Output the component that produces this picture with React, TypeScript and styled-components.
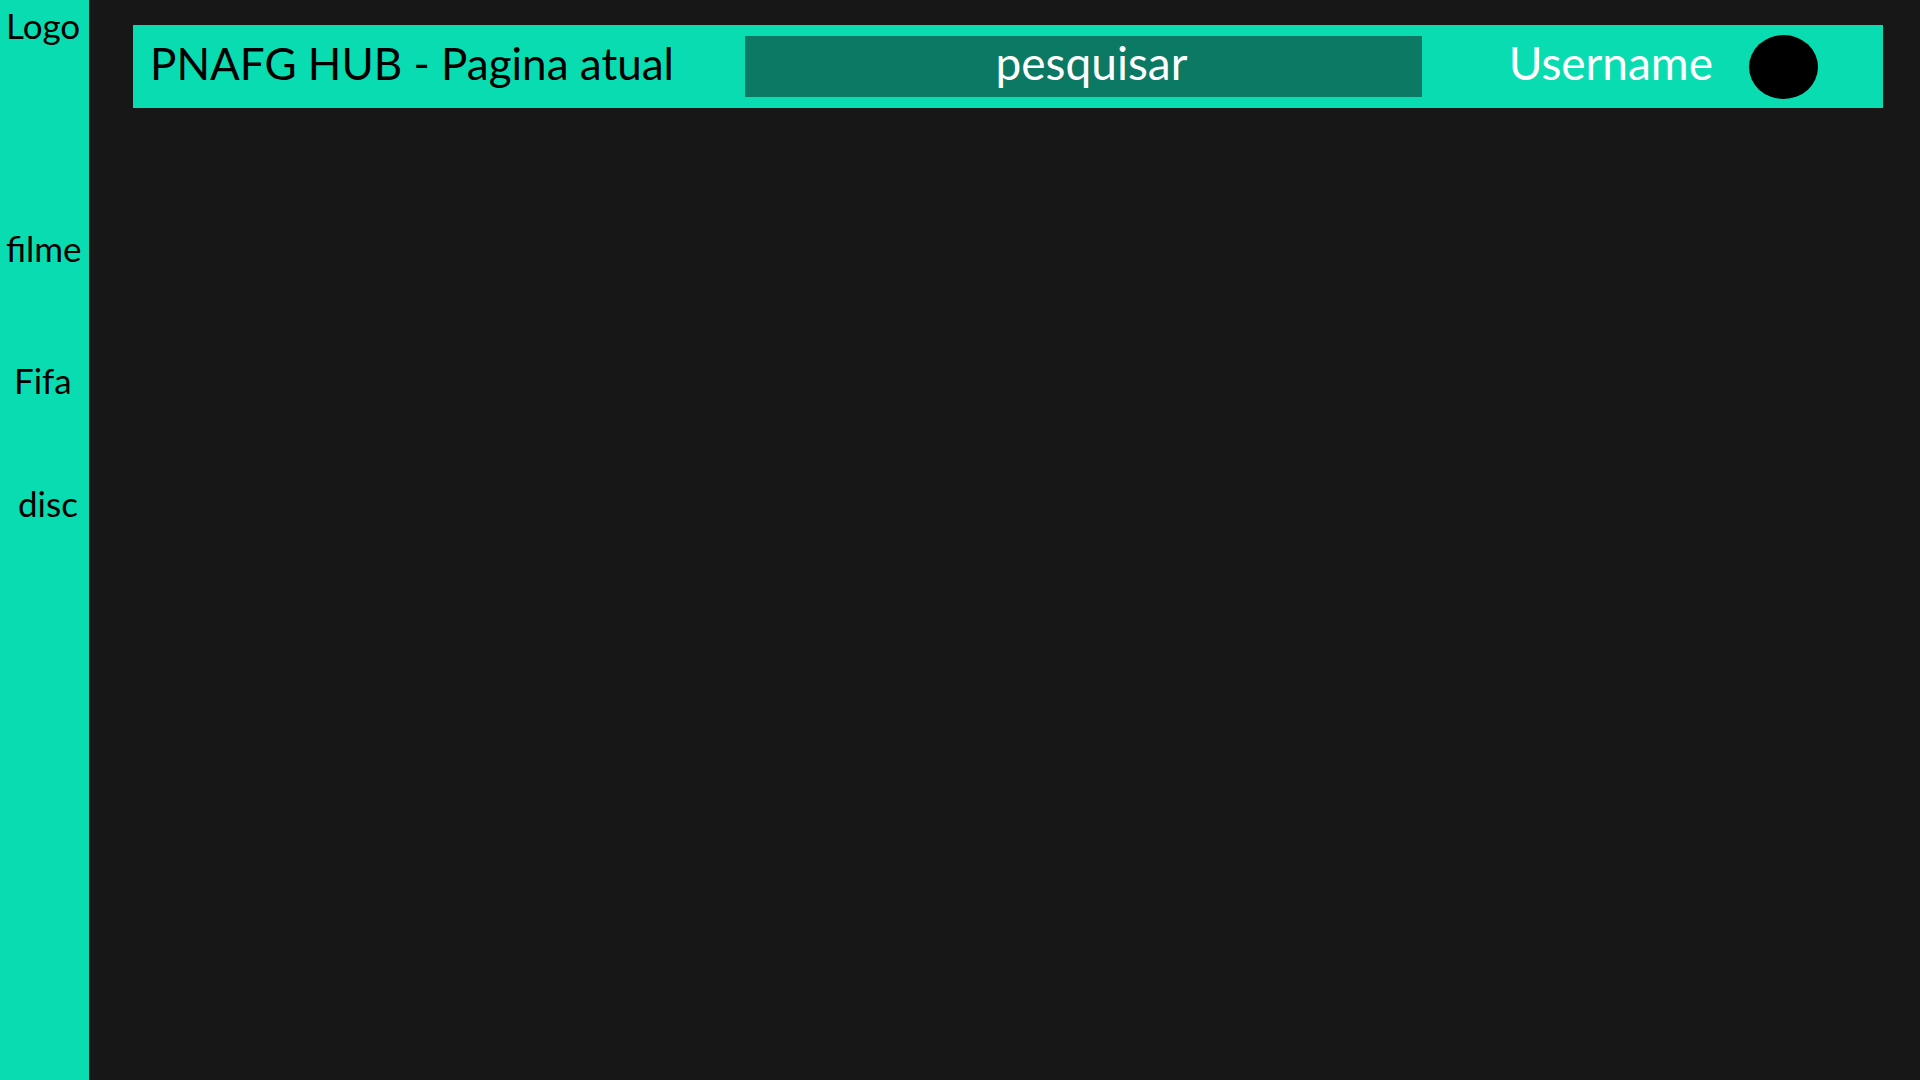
import React from "react";
import styled, { createGlobalStyle } from "styled-components";

const GlobalStyle = createGlobalStyle`
  * { box-sizing: border-box; }
  body { margin: 0; background: #171717; font-family: Lato, "Noto Sans", sans-serif; }
`;

const Page = styled.div`
  display: flex;
  min-height: 100vh;
`;

const Sidebar = styled.nav`
  display: flex;
  flex-direction: column;
  flex: 0 0 89px;
  background: #0adcb2;
  color: #000;
`;

const SideLink = styled.a<{ $gap: number; $indent: number }>`
  margin-top: ${(p) => p.$gap}px;
  padding-left: ${(p) => p.$indent}px;
  color: inherit;
  font-size: 35px;
  line-height: 48px;
  text-decoration: none;
  white-space: nowrap;
`;

const Main = styled.main`
  flex: 1;
  min-width: 0;
  padding: 25px 37px 25px 44px;
`;

const TopBar = styled.header`
  display: flex;
  align-items: center;
  height: 83px;
  padding: 0 65px 0 17px;
  background: #0adcb2;
`;

const Title = styled.h1`
  flex: 0 0 595px;
  margin: 0;
  padding-bottom: 8px;
  font-size: 44px;
  font-weight: 400;
  line-height: 60px;
  white-space: nowrap;
`;

const Search = styled.input`
  flex: 1;
  min-width: 0;
  height: 61px;
  padding: 0 0 8px 16px;
  border: 0;
  background: #0b7963;
  color: #fff;
  font: inherit;
  font-size: 46px;
  text-align: center;
  &::placeholder { color: #fff; opacity: 1; }
`;

const User = styled.div`
  display: flex;
  flex: 0 0 396px;
  align-items: center;
  justify-content: flex-end;
  gap: 36px;
  color: #fff;
  font-size: 46px;
  line-height: 60px;
`;

const UserName = styled.span`
  padding-bottom: 8px;
`;

const Avatar = styled.button`
  width: 69px;
  height: 64px;
  padding: 0;
  border: 0;
  border-radius: 50%;
  background: #000;
`;

const links = [
  { label: "Logo", gap: 1, indent: 6 },
  { label: "filme", gap: 175, indent: 6 },
  { label: "Fifa", gap: 84, indent: 14 },
  { label: "disc", gap: 75, indent: 18 },
];

export default function App() {
  return (
    <Page>
      <GlobalStyle />
      <Sidebar>
        {links.map((l) => (
          <SideLink key={l.label} href="#" $gap={l.gap} $indent={l.indent}>{l.label}</SideLink>
        ))}
      </Sidebar>
      <Main>
        <TopBar>
          <Title>PNAFG HUB - Pagina atual</Title>
          <Search type="text" aria-label="pesquisar" placeholder="pesquisar" />
          <User>
            <UserName>Username</UserName>
            <Avatar aria-label="Username" />
          </User>
        </TopBar>
      </Main>
    </Page>
  );
}
